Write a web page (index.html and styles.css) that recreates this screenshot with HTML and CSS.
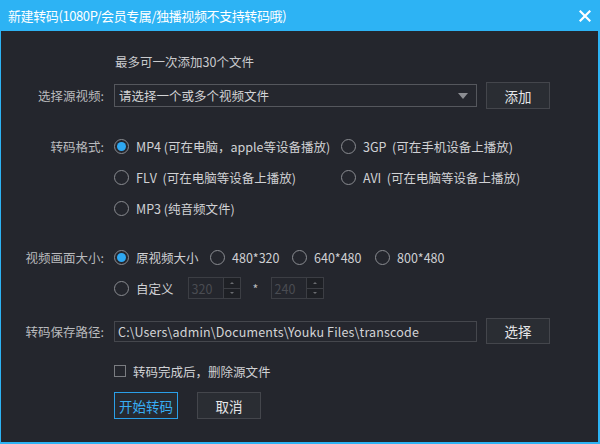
FILE: index.html
```html
<!DOCTYPE html>
<html lang="zh">
<head>
<meta charset="utf-8">
<link rel="stylesheet" href="styles.css">
</head>
<body>
<div class="window">
  <div class="titlebar">
    <span class="title">新建转码(1080P/会员专属/独播视频不支持转码哦)</span>
    <svg class="close" width="12" height="12" viewBox="0 0 12 12"><path d="M1.5 1.5 L10.5 10.5 M10.5 1.5 L1.5 10.5" stroke="#fff" stroke-width="2.2" stroke-linecap="square"/></svg>
  </div>
  <div class="content">
    <div class="hint">最多可一次添加30个文件</div>

    <div class="row source">
      <div class="label">选择源视频:</div>
      <div class="select">
        <span>请选择一个或多个视频文件</span>
        <span class="arrow"></span>
      </div>
      <div class="btn">添加</div>
    </div>

    <div class="row formats">
      <div class="label">转码格式:</div>
      <div class="fgrid">
        <div class="opt"><span class="radio on"></span>MP4 (可在电脑，apple等设备播放)</div>
        <div class="opt"><span class="radio"></span>3GP&nbsp; (可在手机设备上播放)</div>
        <div class="opt"><span class="radio"></span>FLV&nbsp; (可在电脑等设备上播放)</div>
        <div class="opt"><span class="radio"></span>AVI&nbsp; (可在电脑等设备上播放)</div>
        <div class="opt"><span class="radio"></span>MP3 (纯音频文件)</div>
      </div>
    </div>

    <div class="row sizes">
      <div class="label">视频画面大小:</div>
      <div class="scol">
        <div class="sline">
          <div class="opt s1"><span class="radio on"></span>原视频大小</div>
          <div class="opt s2"><span class="radio"></span>480*320</div>
          <div class="opt s3"><span class="radio"></span>640*480</div>
          <div class="opt"><span class="radio"></span>800*480</div>
        </div>
        <div class="sline">
          <div class="opt"><span class="radio"></span>自定义</div>
          <div class="spin first">
            <span class="val">320</span>
            <span class="spinbtns"><span class="sb up"></span><span class="sb down"></span></span>
          </div>
          <span class="star">*</span>
          <div class="spin">
            <span class="val">240</span>
            <span class="spinbtns"><span class="sb up"></span><span class="sb down"></span></span>
          </div>
        </div>
      </div>
    </div>

    <div class="row path">
      <div class="label">转码保存路径:</div>
      <div class="input">C:\Users\admin\Documents\Youku Files\transcode</div>
      <div class="btn">选择</div>
    </div>

    <div class="row check">
      <div class="label"></div>
      <span class="box"></span><span class="ctext">转码完成后，删除源文件</span>
    </div>

    <div class="row actions">
      <div class="label"></div>
      <div class="btn primary">开始转码</div>
      <div class="btn cancel">取消</div>
    </div>
  </div>
</div>
</body>
</html>
```

FILE: styles.css
```css
* { box-sizing: border-box; }
html, body { margin: 0; padding: 0; }
body {
  width: 600px; height: 444px; overflow: hidden;
  font-family: "Noto Sans CJK SC", "Microsoft YaHei", sans-serif;
  font-size: 12.5px;
  color: #c9cacd;
}
.window {
  width: 600px; height: 444px;
  background: #2db3f4;
  display: flex; flex-direction: column;
}
.titlebar {
  height: 31px; flex: none;
  display: flex; align-items: center; justify-content: space-between;
  padding: 0 9px 0 8px;
  color: #fff;
}
.title { font-size: 13px; letter-spacing: -0.4px; }
.close { display: block; }
.content {
  flex: 1;
  margin: 0 2px 2px 1px;
  background: #24262d;
  display: flex; flex-direction: column;
}
.hint {
  margin-top: 21px; height: 20px; line-height: 20px;
  padding-left: 114px;
  color: #c9cacd;
}
.row { display: flex; align-items: center; }
.label {
  width: 103px; flex: none; margin-right: 10px;
  text-align: right;
  color: #b9babd;
  white-space: nowrap;
}
.source { margin-top: 10px; height: 27px; }
.select {
  width: 363px; height: 23px;
  border: 1px solid #55575d;
  background: #25272e;
  display: flex; align-items: center; justify-content: space-between;
  padding: 0 8px 0 4px;
  color: #d3d4d6;
}
.arrow {
  width: 0; height: 0;
  border-left: 5px solid transparent; border-right: 5px solid transparent;
  border-top: 6px solid #8c8e93;
}
.btn {
  height: 27px; width: 64px;
  border: 1px solid #44464c;
  background: #2a2d33;
  color: #e6e7e9;
  font-size: 13.5px;
  display: flex; align-items: center; justify-content: center;
}
.source .btn { margin-left: 9px; }
.formats { margin-top: 21.5px; align-items: flex-start; }
.formats .label { line-height: 31px; }
.fgrid {
  display: grid;
  grid-template-columns: 227px auto;
  grid-auto-rows: 31px;
}
.opt {
  display: flex; align-items: center;
  white-space: nowrap;
  color: #d0d1d4;
  height: 31px;
}
.radio {
  width: 15px; height: 15px; flex: none;
  border: 1px solid #8a8c91;
  border-radius: 50%;
  margin-right: 7px;
  position: relative;
}
.radio.on::after {
  content: ""; position: absolute;
  left: 2px; top: 2px; width: 9px; height: 9px;
  border-radius: 50%;
  background: #2ea8f2;
}
.sizes { margin-top: 18px; align-items: flex-start; }
.sizes .label { line-height: 31px; }
.sline { display: flex; align-items: center; height: 31px; }
.s1 { width: 96px; }
.s2 { width: 82px; }
.s3 { width: 83px; }
.spin {
  width: 53px; height: 22px;
  border: 1px solid #3c3e44;
  display: flex; align-items: center; justify-content: space-between;
  padding-left: 3px;
  color: #4a4c52;
}
.spin.first { margin-left: 14px; }
.spinbtns {
  width: 17px; height: 20px;
  display: flex; flex-direction: column;
  border-left: 1px solid #3c3e44;
}
.sb {
  flex: 1; position: relative;
  background: #1e2025;
}
.sb.up { border-bottom: 1px solid #3c3e44; }
.sb::after {
  content: ""; position: absolute; left: 6px; top: 4px;
  width: 0; height: 0;
  border-left: 2px solid transparent; border-right: 2px solid transparent;
}
.sb.up::after { border-bottom: 2px solid #6a6c71; }
.sb.down::after { border-top: 2px solid #6a6c71; top: 3px; }
.star { width: 30px; text-align: center; color: #b9babd; }
.path { margin-top: 14.5px; height: 26px; }
.input {
  width: 363px; height: 21px;
  border: 1px solid #45474d;
  background: #25272e;
  padding-left: 3px;
  line-height: 19px;
  color: #d3d4d6;
  letter-spacing: 0.15px;
  white-space: nowrap; overflow: hidden;
}
.path .btn { margin-left: 9px; height: 26px; }
.check { margin-top: 17px; height: 20px; }
.box {
  width: 12px; height: 12px;
  border: 1px solid #7a7c81;
  margin-right: 7px;
}
.ctext { color: #d0d1d4; }
.actions { margin-top: 11px; height: 27px; }
.btn.primary {
  border-color: #2a9fe8;
  color: #38adf3;
  background: #262a31;
}
.btn.cancel { margin-left: 19px; }
```
